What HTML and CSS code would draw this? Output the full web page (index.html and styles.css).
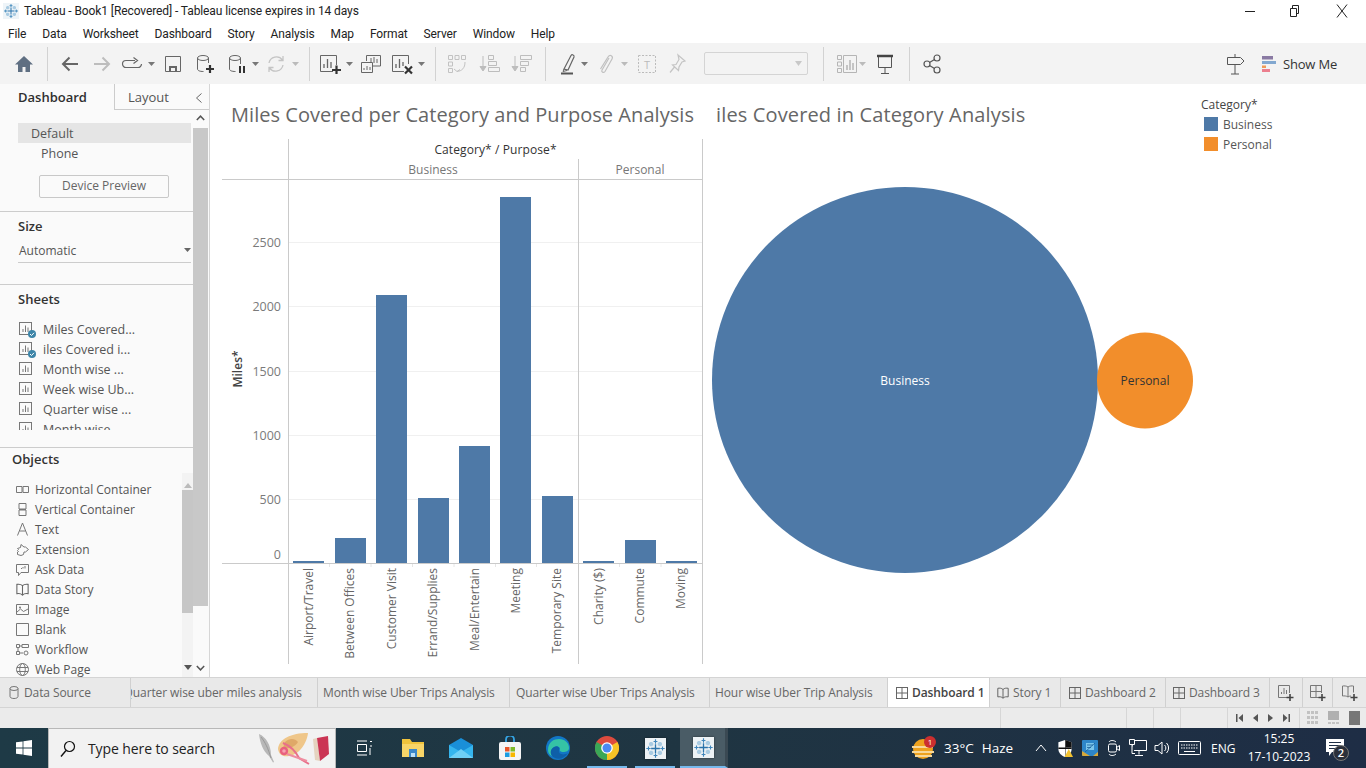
FILE: index.html
```html
<!DOCTYPE html>
<html lang="en">
<head>
<meta charset="utf-8">
<title>Tableau - Book1 [Recovered]</title>
<link rel="stylesheet" href="styles.css">
</head>
<body>
<svg class="defs" width="0" height="0" aria-hidden="true">
  <symbol id="i-sheet" viewBox="0 0 14 14"><rect x=".5" y=".5" width="12" height="12" fill="none" stroke="#777"/><path d="M4 10V7M6.500 10V3.500M9 10V5.500" stroke="#777" fill="none"/></symbol>
  <symbol id="i-dash" viewBox="0 0 12 12"><rect x=".5" y=".5" width="11" height="11" fill="none" stroke="#666"/><path d="M6 .5v11M.5 6h11" stroke="#666"/></symbol>
  <symbol id="i-book" viewBox="0 0 12 12"><path d="M6 2.500C4.500 1 2.500 1 .8 1.300v8.600c1.700-.3 3.700-.3 5.200 1.300 1.500-1.600 3.500-1.600 5.200-1.300V1.300C9.500 1 7.500 1 6 2.500zM6 2.500v8.700" fill="none" stroke="#666"/></symbol>
  <symbol id="i-tableau" viewBox="0 0 24 24"><g stroke="#a9cbe2" stroke-width="3"><path d="M7 4.500v5M4.500 7h5M17 4.500v5M14.500 7h5M7 14.500v5M4.500 17h5M17 14.500v5M14.500 17h5"/></g><g stroke="#3f86bb" stroke-width="1.300"><path d="M12 1.500v5M9.800 4h4.400M12 17.500v5M9.800 20h4.400M1.500 12h5M4 9.800v4.400M17.500 12h5M20 9.800v4.400"/></g><path d="M12 7v10M7 12h10" stroke="#2b73ab" stroke-width="1.500"/></symbol>
  <symbol id="i-caret" viewBox="0 0 7 24"><path d="M0 10h7l-3.500 4z" fill="#777"/></symbol>
  <symbol id="i-caret-off" viewBox="0 0 7 24"><path d="M0 10h7l-3.500 4z" fill="#bbb"/></symbol>
</svg>

<header class="titlebar">
  <svg class="app-icon" width="16" height="16" viewBox="0 0 24 24"><rect width="24" height="24" fill="#eef4f8"/><use href="#i-tableau"/></svg>
  <span class="title-text">Tableau - Book1 [Recovered] - Tableau license expires in 14 days</span>
  <div class="win-btns">
    <svg width="10" height="10" viewBox="0 0 10 10"><path d="M0 5.500h10" stroke="#222"/></svg>
    <svg width="10" height="12" viewBox="0 0 10 12"><path d="M.5 3.500h6v8h-6zM2.500 3.500v-3h6v8h-2" fill="none" stroke="#222"/></svg>
    <svg width="12" height="14" viewBox="0 0 12 14"><path d="M1 .5l10 13M11 .5l-10 13" stroke="#222" fill="none"/></svg>
  </div>
</header>

<nav class="menubar">
  <span>File</span><span>Data</span><span>Worksheet</span><span>Dashboard</span><span>Story</span><span>Analysis</span><span>Map</span><span>Format</span><span>Server</span><span>Window</span><span>Help</span>
</nav>

<div class="toolbar">
  <div class="tool-grid">
    <svg width="24" height="24" viewBox="0 0 24 24"><path d="M12 4L3 12.500h3V20h4.500v-5h3v5H18v-7.500h3z" fill="#5f6f82"/></svg>
    <i class="tsep"></i>
    <svg width="24" height="24" viewBox="0 0 24 24"><path d="M20 12H5M11.500 5.500L5 12l6.500 6.500" fill="none" stroke="#666" stroke-width="2"/></svg>
    <svg width="24" height="24" viewBox="0 0 24 24"><path d="M4 12h15M12.500 5.500L19 12l-6.500 6.500" fill="none" stroke="#bdbdbd" stroke-width="2"/></svg>
    <svg width="24" height="24" viewBox="0 0 24 24"><path d="M15 8.500H6a3.500 3.500 0 000 7h12a3.500 3.500 0 003.500-3.500M13.500 5.500l4 3-4 3" fill="none" stroke="#666" stroke-width="1.200"/></svg>
    <svg width="7" height="24"><use href="#i-caret"/></svg>
    <svg width="24" height="24" viewBox="0 0 24 24"><path d="M4.500 4.500h15v15h-15z" fill="none" stroke="#666"/><path d="M8 19v-5h8v5z" fill="#666"/><path d="M10 19v-3h4v3z" fill="#f3f3f3"/></svg>
    <svg width="24" height="24" viewBox="0 0 24 24"><ellipse cx="10" cy="6" rx="5.500" ry="2.500" fill="none" stroke="#666"/><path d="M4.500 6v11c0 1.500 2 2.500 6 2.500M15.500 6v5" fill="none" stroke="#666"/><path d="M17 13v8M13 17h8" stroke="#333" stroke-width="2.200"/></svg>
    <svg width="24" height="24" viewBox="0 0 24 24"><ellipse cx="10" cy="6" rx="5.500" ry="2.500" fill="none" stroke="#666"/><path d="M4.500 6v11c0 1.500 2 2.500 6 2.500M15.500 6v6" fill="none" stroke="#666"/><path d="M15 14v7M19 14v7" stroke="#333" stroke-width="2"/></svg>
    <svg width="7" height="24"><use href="#i-caret"/></svg>
    <svg width="24" height="24" viewBox="0 0 24 24"><path d="M5 11a7.500 7.500 0 0113.500-3M19 13a7.500 7.500 0 01-13.500 3M19 4v4.500h-4.500M5 20v-4.500h4.500" fill="none" stroke="#c4c4c4" stroke-width="1.300"/></svg>
    <svg width="7" height="24"><use href="#i-caret-off"/></svg>
    <i class="tsep"></i>
    <svg width="24" height="24" viewBox="0 0 24 24"><path d="M15 19.500H2.500v-16h16V13" fill="none" stroke="#666"/><path d="M6 16v-4M9.500 16V7M13 16v-6" stroke="#666" stroke-width="1.300"/><path d="M18.500 13.500v8.500M14 18h9" stroke="#333" stroke-width="2.200"/></svg>
    <svg width="7" height="24"><use href="#i-caret"/></svg>
    <svg width="24" height="24" viewBox="0 0 24 24"><path d="M7.500 9V3.500h14V14H14" fill="none" stroke="#666"/><path d="M2.500 10.500h11v10h-11z" fill="#f3f3f3" stroke="#666"/><path d="M12 10V6M15 11V5M18 11V7M5 18v-2M8 18v-4M11 18v-3" stroke="#666"/></svg>
    <svg width="24" height="24" viewBox="0 0 24 24"><path d="M14 19.500H2.500v-16h16V12" fill="none" stroke="#666"/><path d="M6 16v-4M9.500 16V7M13 14v-4" stroke="#666" stroke-width="1.300"/><path d="M15 14.500l7 7M22 14.500l-7 7" stroke="#333" stroke-width="2.200"/></svg>
    <svg width="7" height="24"><use href="#i-caret"/></svg>
    <i class="tsep"></i>
    <svg width="24" height="24" viewBox="0 0 24 24"><g fill="none" stroke="#c2c2c2"><path d="M3.500 3.500h4v4h-4zM10 3.500h4v4h-4zM16.500 3.500h4v4h-4zM3.500 10h4v4h-4zM3.500 16.500h4v4h-4z"/><path d="M20 10c0 6-3 9-8 9.500M9 17l3 2.500 3-2"/></g></svg>
    <svg width="24" height="24" viewBox="0 0 24 24"><g fill="none" stroke="#bdbdbd"><path d="M11.500 3.500h5v4h-5zM11.500 9.500h8v4h-8zM11.500 15.500h11v4h-11z"/></g><path d="M6 4v14M3 14.500L6 19l3-4.500z" stroke="#bdbdbd" fill="#bdbdbd"/></svg>
    <svg width="24" height="24" viewBox="0 0 24 24"><g fill="none" stroke="#bdbdbd"><path d="M11.500 3.500h11v4h-11zM11.500 9.500h8v4h-8zM11.500 15.500h5v4h-5z"/></g><path d="M6 4v14M3 14.500L6 19l3-4.500z" stroke="#bdbdbd" fill="#bdbdbd"/></svg>
    <i class="tsep"></i>
    <svg width="24" height="24" viewBox="0 0 24 24"><path d="M8 17L15 3.500c1-1.500 3.500-.5 3 1.500L12 18z" fill="none" stroke="#666" stroke-width="1.200"/><path d="M8 17l-1 2.500 4-1" fill="none" stroke="#666"/><path d="M5 21.500h12" stroke="#555" stroke-width="2"/></svg>
    <svg width="7" height="24"><use href="#i-caret"/></svg>
    <svg width="24" height="24" viewBox="0 0 24 24"><path d="M16 6l-7 12c-1 2 1.500 3.500 3 1.500L19 7c1.500-3-2-5-4-2L7.500 17" fill="none" stroke="#c0c0c0" stroke-width="1.200"/></svg>
    <svg width="7" height="24"><use href="#i-caret-off"/></svg>
    <svg width="24" height="24" viewBox="0 0 24 24"><rect x="3.500" y="3.500" width="17" height="17" fill="none" stroke="#bbb" stroke-dasharray="2 1.500"/><text x="12" y="16.500" text-anchor="middle" class="t-glyph">T</text></svg>
    <svg width="24" height="24" viewBox="0 0 24 24"><path d="M13 3l7 6-3 1-3 5-.5 3.500L7.500 13 11 12.500l3-5zM9.500 15L5 20.500" fill="none" stroke="#c4c4c4" stroke-width="1.200"/></svg>
    <div class="disabled-select"><svg width="7" height="5" viewBox="0 0 7 5"><path d="M0 0h7L3.500 5z" fill="#c8c8c8"/></svg></div>
    <i class="tsep"></i>
    <svg width="24" height="24" viewBox="0 0 24 24"><g fill="none" stroke="#b5b5b5"><path d="M2.500 3.500h4v4h-4zM2.500 10h4v4h-4zM2.500 16.500h4v4h-4zM8.500 3.500h13v17h-13z"/></g><path d="M12 18v-5M15 18V8M18 18v-7" stroke="#b5b5b5" stroke-width="1.500"/></svg>
    <svg width="7" height="24"><use href="#i-caret-off"/></svg>
    <svg width="24" height="24" viewBox="0 0 24 24"><path d="M4 4h16" stroke="#444" stroke-width="2.500"/><path d="M5.500 5v10.500h13V5M12 15.500v6M8 21.500h8" fill="none" stroke="#555"/></svg>
    <i class="tsep"></i>
    <svg width="24" height="24" viewBox="0 0 24 24"><g fill="none" stroke="#555" stroke-width="1.200"><circle cx="17" cy="6" r="3"/><circle cx="7" cy="12" r="3"/><circle cx="17" cy="18" r="3"/><path d="M9.500 10.500l5-3M9.500 13.500l5 3"/></g></svg>
  </div>
  <div class="tool-right">
    <svg width="24" height="24" viewBox="0 0 24 24"><path d="M12 2v3M12 13v9M8 22h8" stroke="#555" fill="none"/><path d="M4.500 5.500h13l3.500 3.500-3.500 3.500h-13z" fill="none" stroke="#555"/></svg>
    <span class="showme">
      <svg width="15" height="16" viewBox="0 0 15 16"><path d="M0 0h11v3.500H0z" fill="#8a7aa3"/><path d="M0 5h14v3H0z" fill="#82a8d0"/><path d="M0 9.500h4v2.500H0z" fill="#ef9a57"/><path d="M0 13h8v3H0z" fill="#ec7f8e"/></svg>
      Show Me
    </span>
  </div>
</div>

<main class="workspace">
  <aside class="side">
    <div class="side-tabs">
      <div class="tab-dash">Dashboard</div>
      <div class="tab-layout">Layout
        <svg class="collapse" width="8" height="10" viewBox="0 0 8 10"><path d="M6.500 .5L1.500 5l5 4.500" fill="none" stroke="#666"/></svg>
      </div>
    </div>
    <div class="side-body">
      <div class="side-content">
        <section class="sec-device">
          <div class="row-default">Default</div>
          <div class="row-phone">Phone</div>
          <div class="device-btn">Device Preview</div>
        </section>
        <section class="sec-size">
          <h3 class="sec-head">Size</h3>
          <div class="size-select">Automatic <svg width="7" height="4" viewBox="0 0 7 4"><path d="M0 0h7L3.500 4z" fill="#666"/></svg></div>
        </section>
        <section class="sec-sheets">
          <h3 class="sec-head">Sheets</h3>
          <ul class="sheet-list">
            <li><span class="sheet-ic"><svg width="14" height="14"><use href="#i-sheet"/></svg><svg class="check" width="8" height="8" viewBox="0 0 8 8"><circle cx="4" cy="4" r="4" fill="#3d85a8"/><path d="M2 4l1.500 1.500L6 2.800" stroke="#fff" fill="none"/></svg></span>Miles Covered...</li>
            <li><span class="sheet-ic"><svg width="14" height="14"><use href="#i-sheet"/></svg><svg class="check" width="8" height="8" viewBox="0 0 8 8"><circle cx="4" cy="4" r="4" fill="#3d85a8"/><path d="M2 4l1.500 1.500L6 2.800" stroke="#fff" fill="none"/></svg></span>iles Covered i...</li>
            <li><span class="sheet-ic"><svg width="14" height="14"><use href="#i-sheet"/></svg></span>Month wise ...</li>
            <li><span class="sheet-ic"><svg width="14" height="14"><use href="#i-sheet"/></svg></span>Week wise Ub...</li>
            <li><span class="sheet-ic"><svg width="14" height="14"><use href="#i-sheet"/></svg></span>Quarter wise ...</li>
            <li><span class="sheet-ic"><svg width="14" height="14"><use href="#i-sheet"/></svg></span>Month wise ...</li>
          </ul>
        </section>
        <section class="sec-objects">
          <h3 class="sec-head obj-head">Objects</h3>
          <div class="obj-wrap">
            <ul class="obj-list">
              <li><svg width="13" height="13" viewBox="0 0 13 13"><path d="M.5 3.500h5.500v6H.5zM7 3.500h5.500v6H7z" fill="none" stroke="#777"/></svg>Horizontal Container</li>
              <li><svg width="13" height="13" viewBox="0 0 13 13"><path d="M3 .5h7v5.500H3zM3 7h7v5.500H3z" fill="none" stroke="#777"/><path d="M3 6h7v1H3z" fill="#777"/></svg>Vertical Container</li>
              <li><svg width="13" height="14" viewBox="0 0 13 14"><path d="M1.500 13.500L6.500 1l5 12.500M3.500 9h6" fill="none" stroke="#777"/></svg>Text</li>
              <li><svg width="13" height="13" viewBox="0 0 13 13"><path d="M5 1.500l3 2.500h1.500l3 2.500-3 2.500H8l-.5 2.500-2.500 1-3.500-1V9l1-.5-1-1 1-1-1-1 3-1z" fill="none" stroke="#777"/></svg>Extension</li>
              <li><svg width="13" height="13" viewBox="0 0 13 13"><path d="M.5 1.500h12v8H5l-2.500 3v-3h-2z" fill="none" stroke="#777"/><path d="M5 5.500h1M7 5.500V4M9 5.500V3" stroke="#777"/></svg>Ask Data</li>
              <li><svg width="13" height="13" viewBox="0 0 12 12"><use href="#i-book"/></svg>Data Story</li>
              <li><svg width="13" height="13" viewBox="0 0 13 13"><path d="M.5 1.500h12v10H.5z" fill="none" stroke="#777"/><path d="M1 9l3.500-3 3 2.500L12 6" fill="none" stroke="#777"/><circle cx="4" cy="4.500" r="1" fill="#777"/></svg>Image</li>
              <li><svg width="13" height="13" viewBox="0 0 13 13"><path d="M.5 .5h12v12H.5z" fill="none" stroke="#777"/></svg>Blank</li>
              <li><svg width="13" height="13" viewBox="0 0 13 13"><g fill="none" stroke="#777"><path d="M.5 1.500h3v3h-3zM.5 8.500h3v3h-3zM6 1.500h6.500v3H6zM3.500 3H6M2 4.500v4M3.500 10H7"/><circle cx="10" cy="10" r="2"/></g></svg>Workflow</li>
              <li><svg width="13" height="13" viewBox="0 0 13 13"><g fill="none" stroke="#777"><circle cx="6.500" cy="6.500" r="6"/><ellipse cx="6.500" cy="6.500" rx="2.800" ry="6"/><path d="M1 4.500h11M1 8.500h11"/></g></svg>Web Page</li>
            </ul>
            <div class="mini-scroll">
              <svg class="mini-up" width="8" height="5" viewBox="0 0 8 5"><path d="M0 5l4-5 4 5z" fill="#bbb"/></svg>
              <div class="mini-thumb"></div>
              <svg class="mini-down" width="8" height="5" viewBox="0 0 8 5"><path d="M0 0l4 5 4-5z" fill="#555"/></svg>
            </div>
          </div>
        </section>
      </div>
      <div class="side-scroll">
        <svg class="up" width="9" height="6" viewBox="0 0 9 6"><path d="M.8 5L4.500 1.200 8.200 5" fill="none" stroke="#555" stroke-width="1.500"/></svg>
        <div class="side-thumb"></div>
        <svg class="down" width="9" height="6" viewBox="0 0 9 6"><path d="M.8 1l3.700 3.800L8.200 1" fill="none" stroke="#555" stroke-width="1.500"/></svg>
      </div>
    </div>
  </aside>

  <div class="canvas">
    <section class="view-bar">
      <h2 class="view-title">Miles Covered per Category and Purpose Analysis</h2>
      <svg class="bar-chart" width="481" height="525" viewBox="222 139 481 525">
        <g class="grid">
          <path d="M288 242.500h414M288 306.500h414M288 371.500h414M288 435.500h414M288 499.500h414"/>
        </g>
        <g class="axis">
          <path d="M288.500 139v525M578.500 159v505M702.500 139v525M222 179.500h481M222 563.500h481"/>
        </g>
        <path class="xticks" d="M329.500 564v3M371 564v3M412.500 564v3M454 564v3M495.500 564v3M536.500 564v3M619.500 564v3M661 564v3"/>
        <g class="bars">
          <rect x="293" y="561" width="31" height="2"/>
          <rect x="335" y="538" width="31" height="25"/>
          <rect x="376" y="295" width="31" height="268"/>
          <rect x="418" y="498" width="31" height="65"/>
          <rect x="459" y="446" width="31" height="117"/>
          <rect x="500" y="197" width="31" height="366"/>
          <rect x="542" y="496" width="31" height="67"/>
          <rect x="583" y="561" width="31" height="2"/>
          <rect x="625" y="540" width="31" height="23"/>
          <rect x="666" y="561" width="31" height="2"/>
        </g>
        <text class="hdr" x="495.500" y="153.500" text-anchor="middle">Category* / Purpose*</text>
        <text class="sub" x="433" y="174" text-anchor="middle">Business</text>
        <text class="sub" x="640" y="174" text-anchor="middle">Personal</text>
        <g class="ticks" text-anchor="end">
          <text x="281" y="246.500">2500</text><text x="281" y="310.500">2000</text><text x="281" y="375.500">1500</text><text x="281" y="439.500">1000</text><text x="281" y="503.500">500</text><text x="281" y="558.500">0</text>
        </g>
        <text class="ylabel" transform="translate(242 369) rotate(-90)" text-anchor="middle">Miles*</text>
        <g class="cats" text-anchor="end">
          <text transform="translate(313 568) rotate(-90)">Airport/Travel</text>
          <text transform="translate(354 568) rotate(-90)">Between Offices</text>
          <text transform="translate(396 568) rotate(-90)">Customer Visit</text>
          <text transform="translate(437 568) rotate(-90)">Errand/Supplies</text>
          <text transform="translate(479 568) rotate(-90)">Meal/Entertain</text>
          <text transform="translate(520 568) rotate(-90)">Meeting</text>
          <text transform="translate(561 568) rotate(-90)">Temporary Site</text>
          <text transform="translate(603 568) rotate(-90)">Charity ($)</text>
          <text transform="translate(644 568) rotate(-90)">Commute</text>
          <text transform="translate(685 568) rotate(-90)">Moving</text>
        </g>
      </svg>
    </section>
    <section class="view-bubble">
      <h2 class="view-title">iles Covered in Category Analysis</h2>
      <svg class="bubble-chart" width="492" height="525" viewBox="703 139 492 525">
        <circle cx="905" cy="380" r="193" fill="#4e79a7"/>
        <circle cx="1145" cy="380.500" r="48" fill="#f28e2b"/>
        <text class="b-light" x="905" y="385" text-anchor="middle">Business</text>
        <text class="b-dark" x="1145" y="385" text-anchor="middle">Personal</text>
      </svg>
    </section>
    <aside class="legend">
      <h4 class="legend-title">Category*</h4>
      <div class="legend-row"><i class="swatch sw-blue"></i>Business</div>
      <div class="legend-row"><i class="swatch sw-orange"></i>Personal</div>
    </aside>
  </div>
</main>

<div class="tabs">
  <div class="tab t-ds"><svg width="10" height="13" viewBox="0 0 10 13"><ellipse cx="5" cy="2.500" rx="4" ry="2" fill="none" stroke="#777"/><path d="M1 2.500v8c0 1 1.500 2 4 2s4-1 4-2v-8" fill="none" stroke="#777"/></svg>Data Source</div>
  <div class="tab t-clip"><span>Quarter wise uber miles analysis</span></div>
  <div class="tab t-month">Month wise Uber Trips Analysis</div>
  <div class="tab t-quarter">Quarter wise Uber Trips Analysis</div>
  <div class="tab t-hour">Hour wise Uber Trip Analysis</div>
  <div class="tab t-active"><svg width="12" height="12"><use href="#i-dash"/></svg>Dashboard 1</div>
  <div class="tab t-story"><svg width="12" height="12"><use href="#i-book"/></svg>Story 1</div>
  <div class="tab t-d2"><svg width="12" height="12"><use href="#i-dash"/></svg>Dashboard 2</div>
  <div class="tab t-d3"><svg width="12" height="12"><use href="#i-dash"/></svg>Dashboard 3</div>
  <div class="tab t-add t-add1"><svg width="16" height="16" viewBox="0 0 16 16"><path d="M9 12.500H.5v-12h11V8" fill="none" stroke="#777"/><path d="M3.500 9V7M6 9V3M8.500 9V5" stroke="#777"/><path d="M12 9v7M8.500 12.500h7" stroke="#444" stroke-width="1.600"/></svg></div>
  <div class="tab t-add t-add2"><svg width="16" height="16" viewBox="0 0 16 16"><path d="M9 12.500H.5v-12h11V8M6 .5v12M.5 6.500h11" fill="none" stroke="#777"/><path d="M12 9v7M8.500 12.500h7" stroke="#444" stroke-width="1.600"/></svg></div>
  <div class="tab t-add t-add3"><svg width="16" height="16" viewBox="0 0 16 16"><path d="M6 2C4.500.8 2 .8.500 1v10c1.500-.2 4-.2 5.500 1 .8-.6 1.700-1 3-1M6 2c1.500-1.200 4-1.200 5.500-1v6.500M6 2v10" fill="none" stroke="#777"/><path d="M12 9v7M8.500 12.500h7" stroke="#444" stroke-width="1.600"/></svg></div>
</div>

<div class="statusbar">
  <i class="st st-1"></i><i class="st st-2"></i><i class="st st-3"></i><i class="st st-4"></i>
  <div class="st st-nav">
    <svg width="7" height="8" viewBox="0 0 7 8"><path d="M0 0h1.500v8H0zM7 0v8L2.500 4z" fill="#555"/></svg>
    <svg width="5" height="8" viewBox="0 0 5 8"><path d="M5 0v8L0 4z" fill="#555"/></svg>
    <svg width="5" height="8" viewBox="0 0 5 8"><path d="M0 0v8l5-4z" fill="#555"/></svg>
    <svg width="7" height="8" viewBox="0 0 7 8"><path d="M7 0H5.500v8H7zM0 0v8l4.500-4z" fill="#555"/></svg>
  </div>
  <div class="st st-views">
    <svg width="11" height="14" viewBox="0 0 11 14"><path d="M0 0h3v3H0zM4 0h3v3H4zM8 0h3v3H8zM0 5h3v3H0zM4 5h3v3H4zM8 5h3v3H8zM0 10h3v3H0zM4 10h3v3H4zM8 10h3v3H8z" fill="#c2c2c2"/></svg>
    <svg width="11" height="14" viewBox="0 0 11 14"><path d="M0 0h11v9H0z" fill="#b0b0b0"/><path d="M0 11h3v2H0zM4 11h3v2H4zM8 11h3v2H8z" fill="#c4c4c4"/></svg>
    <svg width="11" height="14" viewBox="0 0 11 14"><path d="M0 0h11v14H0z" fill="#777"/></svg>
  </div>
</div>

<footer class="taskbar">
  <div class="start"><svg width="16" height="16" viewBox="0 0 16 16"><path d="M0 2.300l6.600-.9v6.200H0zM7.400 1.300L16 0v7.600H7.400zM0 8.400h6.600v6.200L0 13.700zM7.400 8.400H16V16l-8.600-1.300z" fill="#fff"/></svg></div>
  <div class="search">
    <svg width="16" height="18" viewBox="0 0 16 18"><circle cx="9.500" cy="6.500" r="5" fill="none" stroke="#111" stroke-width="1.200"/><path d="M6 10.500l-5 6" stroke="#111" stroke-width="1.400"/></svg>
    <span class="search-text">Type here to search</span>
    <svg class="search-art" width="74" height="38" viewBox="8 1 74 38">
      <path d="M10 5c7 3 12 11 12 21l3 7-1 .5-4-6.500C14 22 11 14 10 5z" fill="#b8b8b8"/>
      <path d="M12 8c4 5 7 11 10 21" stroke="#8c8c8c" stroke-width=".7" fill="none"/>
      <path d="M29 20c1-10 13-16 30-16-1 10-9 22-19 23-6 1-10-1-11-7z" fill="#efc689"/>
      <path d="M36 13c4-4 10-4 13 0-3 5-9 7-15 6z" fill="#dfa868"/>
      <path d="M34 14c5 2 12 7 16 15l10 6" fill="none" stroke="#e8708a" stroke-width="2"/>
      <path d="M38 25l20 7" fill="none" stroke="#ef8da0" stroke-width="2"/>
      <circle cx="35" cy="22" r="4.200" fill="#e9617f"/><circle cx="35" cy="22" r="1.800" fill="#f6a3b2"/>
      <path d="M64 10l4-1 3 23-5-1z" fill="#e5d3bf"/>
      <path d="M68 9l11-2 1 18-9 7z" fill="#cb3554"/>
    </svg>
  </div>
  <div class="task-icons">
    <div class="task"><svg width="18" height="18" viewBox="0 0 18 18"><path d="M2 2h10M2 16h10" stroke="#fff" fill="none"/><path d="M2.500 5.500h9v7h-9zM15 2.500h2M15 7h2M15 9v7" fill="none" stroke="#fff"/></svg></div>
    <div class="task"><svg width="22" height="20" viewBox="0 0 22 20"><path d="M0 1h8l2 3h12v15H0z" fill="#f0c33c"/><path d="M0 6h22v13H0z" fill="#f8d568"/><path d="M7 11h8v8H7z" fill="#3b87c9"/><path d="M9 15h4v4H9z" fill="#bcdff6"/></svg></div>
    <div class="task"><svg width="24" height="20" viewBox="0 0 24 20"><path d="M0 7L12 0l12 7v13H0z" fill="#1a8fd8"/><path d="M0 7l12 7 12-7v13H0z" fill="#35b5ee"/><path d="M0 20l12-9 12 9z" fill="#6fd0f6"/></svg></div>
    <div class="task"><svg width="22" height="24" viewBox="0 0 22 24"><path d="M7 7V3.500a4 4 0 018 0V7" fill="none" stroke="#35a5e5" stroke-width="1.800"/><rect x="0" y="6" width="22" height="18" rx="2" fill="#f5f5f5"/><path d="M6 11h4.500v4.500H6z" fill="#e8562a"/><path d="M11.500 11H16v4.500h-4.500z" fill="#7fba2a"/><path d="M6 16.500h4.500V21H6z" fill="#1b9de2"/><path d="M11.500 16.500H16V21h-4.500z" fill="#f8b800"/></svg></div>
    <div class="task"><svg width="24" height="24" viewBox="0 0 24 24"><circle cx="12" cy="12" r="12" fill="#1276c6"/><path d="M2 14C2 6 8 3 13 3c6 0 10 4 10 9 0 3-3 4-6 4-2 0-4-1-3-3 0-2-2-3-5-2-4 1-5 5-3 9-3-1-4-4-4-6z" fill="#35c3a5"/><path d="M8 11c3-2 6 0 5 3-1 4 4 6 9 3-3 5-9 7-13 5-5-2-6-8-1-11z" fill="#0e5fa8"/></svg></div>
    <div class="task task-run"><svg width="24" height="24" viewBox="0 0 24 24"><circle cx="12" cy="12" r="12" fill="#dd4b3e"/><path d="M12 12L22.400 6A12 12 0 0112 24z" fill="#f7c325"/><path d="M12 12L12 24A12 12 0 011.600 6z" fill="#3aa757"/><circle cx="12" cy="12" r="5.800" fill="#fff"/><circle cx="12" cy="12" r="4.500" fill="#4a8af4"/></svg></div>
    <div class="task task-run"><svg class="tile" width="21" height="21" viewBox="0 0 24 24"><rect width="24" height="24" fill="#edf2f5"/><use href="#i-tableau"/></svg></div>
    <div class="task task-active"><svg class="tile" width="21" height="21" viewBox="0 0 24 24"><rect width="24" height="24" fill="#edf2f5"/><use href="#i-tableau"/></svg></div>
  </div>
  <div class="tray">
    <span class="weather">
      <svg width="24" height="24" viewBox="0 0 24 24"><circle cx="11" cy="13" r="10" fill="#eea21e"/><path d="M0 10h21v2H0zM0 15h22v2H0zM3 19h17v2H3z" fill="#f7d89a"/><circle cx="18" cy="6" r="6" fill="#cc2f2f"/><text x="18" y="9" text-anchor="middle" class="badge-1">1</text></svg>
      <span class="temp">33°C</span><span class="haze">Haze</span>
    </span>
    <svg class="t-chev" width="12" height="8" viewBox="0 0 12 8"><path d="M1 7l5-6 5 6" stroke="#fff" fill="none"/></svg>
    <svg class="t-shield" width="16" height="17" viewBox="0 0 16 18"><path d="M8 0l7 2.500v7c0 4-3 7-7 8.500-4-1.500-7-4.500-7-8.500v-7z" fill="#fff"/><path d="M8 0v8H1v1.500h7V18h.5V9.500H15V8H8.500V0z" fill="#111"/><path d="M8.500 0L15 2.500V8H8.500z" fill="#111"/><path d="M12 9.500l4.500 8.500h-9z" fill="#f2c230"/></svg>
    <svg class="t-app" width="16" height="16" viewBox="0 0 16 16"><rect width="16" height="16" rx="1" fill="#2e86c9"/><path d="M0 11l8 5H1a1 1 0 01-1-1zM16 16h-5l5-4z" fill="#d9a93a"/><path d="M4 3h8v7H4z" fill="#7cc6ec"/><path d="M5 5h6M5 7.500h4M3 12l10-9" stroke="#1a5f9a" stroke-width=".8"/></svg>
    <svg class="t-cam" width="14" height="20" viewBox="0 0 14 20"><path d="M2 4c1-2 5-2 7 0M2 16c1 2 5 2 7 0" stroke="#fff" fill="none"/><rect x="1.500" y="6" width="8" height="8" rx="1.500" fill="none" stroke="#fff"/><path d="M9.500 9.500l3-2v5l-3-2" fill="none" stroke="#fff"/></svg>
    <svg class="t-net" width="18" height="18" viewBox="0 0 18 18"><path d="M3.500 1.500h14v10h-14zM10 11.500v4M6 16.500h8" fill="none" stroke="#fff"/><path d="M.5 .5h5v5h-5zM3 5.500v9h3" fill="#1e2f40" stroke="#fff"/></svg>
    <svg class="t-vol" width="16" height="16" viewBox="0 0 16 16"><path d="M1 5.500h3L8 2v12l-4-3.500H1z" fill="none" stroke="#fff"/><path d="M10.500 5a4 4 0 010 6M12.500 3a7 7 0 010 10" fill="none" stroke="#fff"/></svg>
    <svg class="t-kbd" width="23" height="14" viewBox="0 0 23 14"><rect x=".5" y=".5" width="22" height="13" rx="1" fill="none" stroke="#fff"/><path d="M3 4h17M3 7h17" stroke="#fff" stroke-dasharray="1.500 1"/><path d="M6 10.500h11" stroke="#fff"/></svg>
    <span class="eng">ENG</span>
    <span class="clock"><span>15:25</span><span>17-10-2023</span></span>
    <span class="notif">
      <svg width="18" height="18" viewBox="0 0 18 18"><path d="M0 0h18v13H6l-3 4v-4H0z" fill="#fff"/><path d="M3 3.500h12M3 6.500h12M3 9.500h8" stroke="#1e2f47"/></svg>
      <span class="notif-n">2</span>
    </span>
  </div>
</footer>
</body>
</html>
```
FILE: styles.css
```css
* { box-sizing: border-box; }
html, body { margin: 0; padding: 0; }
body {
  width: 1366px;
  height: 768px;
  overflow: hidden;
  background: #fff;
  font-family: "Open Sans", "Noto Sans", sans-serif;
  font-size: 12px;
  color: #555;
  display: flex;
  flex-direction: column;
}
.defs { position: absolute; }
h2, h3, h4, ul { margin: 0; padding: 0; font-weight: normal; list-style: none; }
i { display: block; }

.titlebar { height: 22px; flex: none; display: flex; align-items: center; padding-left: 3px; color: #222; font-family: Roboto, "Open Sans", sans-serif; letter-spacing: -0.1px; }
.app-icon { margin-right: 5px; }
.win-btns { margin-left: auto; display: grid; grid-template-columns: 45px 46px 30px; align-items: center; width: 121px; }

.menubar { height: 21px; flex: none; display: flex; align-items: center; gap: 16px; padding: 2px 0 0 8px; color: #222; font-family: Roboto, "Open Sans", sans-serif; letter-spacing: -0.12px; }

.toolbar { height: 41px; flex: none; display: flex; align-items: center; background: #f3f3f3; padding-left: 12px; }
.tool-grid {
  display: grid;
  align-items: center;
  grid-template-columns: 35px 11px 32px 30px 28px 13px 32px 32px 27px 12px 28px 17px 9px 28px 13px 31px 28px 17px 10px 32px 32px 36px 11px 25px 12px 28px 14px 30px 39px 119px 12px 24px 14px 36px 11px 24px;
}
.tsep { width: 1px; height: 34px; background: #d2d2d2; }
.t-glyph { font-size: 11px; fill: #bbb; }
.disabled-select { width: 104px; height: 23px; border: 1px solid #d4d4d4; border-radius: 2px; display: flex; align-items: center; justify-content: flex-end; padding-right: 5px; }
.tool-right { margin-left: auto; display: flex; align-items: center; gap: 15px; padding-right: 29px; }
.showme { display: flex; align-items: center; gap: 6px; color: #333; font-size: 13px; letter-spacing: -0.2px; }

.workspace { height: 593px; flex: none; display: flex; }
.side { width: 210px; flex: none; background: #fafafa; border-right: 1px solid #d6d6d6; display: flex; flex-direction: column; }
.side-tabs { height: 26px; flex: none; display: flex; }
.tab-dash { width: 114px; padding: 4px 0 0 18px; font-size: 13px; font-weight: 600; color: #2f2f2f; }
.tab-layout { flex: 1; border-left: 1px solid #ccc; border-bottom: 1px solid #ccc; padding: 4px 0 0 13px; font-size: 13px; color: #555; display: flex; align-items: flex-start; }
.collapse { margin: 5px 0 0 auto; margin-right: 6px; }
.side-body { flex: 1; display: flex; min-height: 0; }
.side-content { width: 193px; flex: none; display: flex; flex-direction: column; }
.side-scroll { width: 15px; flex: none; display: flex; flex-direction: column; align-items: center; padding-top: 5px; }
.side-thumb { width: 15px; height: 478px; margin-top: 7px; background: #c8c8c8; }
.down { margin-top: 59px; }

.sec-device { height: 102px; padding-top: 13px; border-bottom: 1px solid #ccc; }
.row-default { height: 20px; margin-left: 18px; width: 173px; background: #e5e5e5; padding: 1px 0 0 13px; line-height: 20px; font-size: 12.5px; }
.row-phone { height: 20px; padding: 1px 0 0 41px; line-height: 20px; font-size: 12.5px; }
.device-btn { width: 130px; height: 23px; margin: 12px 0 0 39px; border: 1px solid #c8c8c8; border-radius: 2px; text-align: center; line-height: 20px; color: #666; background: #fafafa; }
.sec-head { font-size: 13px; font-weight: 600; color: #333; line-height: 20px; padding-left: 18px; }
.sec-size { height: 73px; padding-top: 4px; border-bottom: 1px solid #ccc; }
.size-select { height: 22px; margin: 5px 2px 0 18px; border-bottom: 1px solid #ccc; display: flex; align-items: center; justify-content: space-between; padding: 0 0 3px 1px; }
.sec-sheets { height: 163px; padding-top: 4px; border-bottom: 1px solid #ccc; }
.sheet-list { margin-top: 10px; height: 111px; overflow: hidden; }
.sheet-list li { height: 20px; display: flex; align-items: center; padding-left: 19px; font-size: 12.5px; color: #555; }
.sheet-ic { position: relative; display: flex; width: 24px; flex: none; }
.check { position: absolute; left: 9px; top: 8px; }
.sec-objects { flex: 1; min-height: 0; display: flex; flex-direction: column; padding-top: 1px; }
.obj-head { padding-left: 12px; flex: none; }
.obj-wrap { flex: 1; min-height: 0; display: flex; margin-top: 4px; }
.obj-list { width: 182px; flex: none; padding-top: 6px; }
.obj-list li { height: 20px; display: flex; align-items: center; gap: 6px; padding-left: 16px; color: #555; }
.mini-scroll { width: 11px; flex: none; background: #f3f3f3; display: flex; flex-direction: column; align-items: center; padding-top: 10px; }
.mini-thumb { width: 11px; height: 123px; margin-top: 2px; background: #c6c6c6; }
.mini-down { margin-top: 52px; }

.canvas { flex: 1; min-width: 0; background: #fff; display: flex; padding: 0 0 0 12px; }
.view-bar { width: 481px; flex: none; display: flex; flex-direction: column; }
.view-bubble { width: 492px; flex: none; display: flex; flex-direction: column; }
.view-title { height: 55px; padding: 17px 0 0 9px; font-size: 20px; line-height: 27px; color: #666; white-space: nowrap; letter-spacing: 0.05px; }
.view-bubble .view-title { padding-left: 13px; letter-spacing: 0.14px; }
.grid path { stroke: #f0f0f0; fill: none; }
.axis path { stroke: #cacaca; fill: none; }
.xticks { stroke: #e6e6e6; fill: none; }
.bars rect { fill: #4e79a7; }
svg text { font-family: "Open Sans", "Noto Sans", sans-serif; }
.hdr { font-size: 12px; fill: #333; font-weight: 500; letter-spacing: 0.1px; }
.sub { font-size: 12px; fill: #777; }
.ticks text { font-size: 12.500px; fill: #7a7a7a; }
.ylabel { font-size: 12px; font-weight: 600; fill: #444; }
.cats text { font-size: 12px; fill: #666; }
.b-light { font-size: 12px; fill: #fff; }
.b-dark { font-size: 12px; fill: #333; }

.legend { flex: 1; padding: 12px 0 0 6px; }
.legend-title { font-size: 12px; font-weight: 500; color: #444; line-height: 17px; }
.legend-row { height: 20px; display: flex; align-items: center; gap: 5px; margin-left: 3px; color: #555; }
.legend-title + .legend-row { margin-top: 1px; }
.swatch { width: 14px; height: 14px; }
.sw-blue { background: #4e79a7; }
.sw-orange { background: #f28e2b; }

.tabs { height: 31px; flex: none; display: flex; background: #e9e9e9; border-top: 1px solid #d4d4d4; border-bottom: 1px solid #d4d4d4; color: #666; letter-spacing: -0.1px; }
.tab { flex: none; display: flex; align-items: center; border-right: 1px solid #d0d0d0; white-space: nowrap; overflow: hidden; gap: 4px; }
.t-ds { width: 131px; padding-left: 9px; gap: 5px; }
.t-clip { width: 187px; justify-content: flex-end; padding-right: 15px; }
.t-clip span { flex: none; }
.t-month { width: 192px; padding-left: 5px; }
.t-quarter { width: 200px; padding-left: 6px; }
.t-hour { width: 178px; padding-left: 5px; }
.t-active { width: 102px; padding-left: 8px; background: #fff; font-weight: 600; color: #444; }
.t-story { width: 71px; padding-left: 7px; }
.t-d2 { width: 105px; padding-left: 8px; }
.t-d3 { width: 104px; padding-left: 7px; }
.t-add { justify-content: center; }
.t-add1 { width: 33px; }
.t-add2 { width: 30px; }
.t-add3 { width: 33px; border-right: 0; }

.statusbar { height: 20px; flex: none; background: #ebebeb; display: flex; padding-left: 1000px; }
.st { height: 100%; border-left: 1px solid #d6d6d6; flex: none; }
.st-1 { width: 126px; }
.st-2 { width: 27px; }
.st-3 { width: 27px; }
.st-4 { width: 47px; }
.st-nav { width: 72px; display: flex; align-items: center; justify-content: flex-start; gap: 10px; padding-left: 8px; }
.st-views { flex: 1; display: flex; align-items: center; gap: 10px; padding-left: 7px; }

.taskbar { height: 40px; flex: none; display: flex; align-items: center; background: linear-gradient(90deg, #1e3a46 0%, #1f3542 50%, #1e2d45 100%); color: #fff; }
.start { width: 48px; height: 100%; display: flex; align-items: center; justify-content: center; }
.search { width: 288px; height: 100%; background: #f2f2f2; border: 1px solid #b8b8b8; border-bottom: 0; display: flex; align-items: center; padding-left: 11px; color: #222; }
.search-text { margin-left: 12px; font-size: 14px; letter-spacing: -0.1px; }
.search-art { margin-left: auto; margin-right: 4px; }
.task-icons { display: flex; height: 100%; margin-left: 4px; }
.task { width: 48.5px; height: 100%; display: flex; align-items: center; justify-content: center; }
.task-run { background: linear-gradient(#76b9ed, #76b9ed) center bottom / 40px 2px no-repeat; }
.task-active { background: #4a5c66; border-bottom: 2px solid #76b9ed; border-right: 3px solid #3a4953; padding-left: 3px; }
.tile { box-shadow: 0 0 2px rgba(0, 0, 0, 0.5); }
.tray { flex: 1; height: 100%; display: flex; align-items: center; position: relative; }
.weather { display: flex; align-items: center; margin-left: 184px; width: 110px; font-size: 13.500px; flex: none; }
.temp { margin-left: 8px; }
.haze { margin-left: 8px; }
.t-chev { margin-left: 13px; }
.t-shield { margin-left: 10px; }
.t-app { margin-left: 9px; }
.t-cam { margin-left: 9px; }
.t-net { margin-left: 8px; }
.t-vol { margin-left: 7px; }
.t-kbd { margin-left: 8px; }
.eng { margin-left: 10px; font-size: 12px; width: 24px; }
.clock { display: flex; flex-direction: column; align-items: center; width: 66px; margin-left: 11px; font-size: 12px; line-height: 18px; }
.notif { position: relative; margin-left: 14px; display: flex; }
.notif-n { position: absolute; left: 7px; top: 6px; width: 16px; height: 16px; border-radius: 50%; background: #2a2f3a; border: 1px solid #777; font-size: 11px; font-weight: 600; line-height: 14px; text-align: center; }
.badge-1 { font-size: 8px; fill: #fff; }
```
